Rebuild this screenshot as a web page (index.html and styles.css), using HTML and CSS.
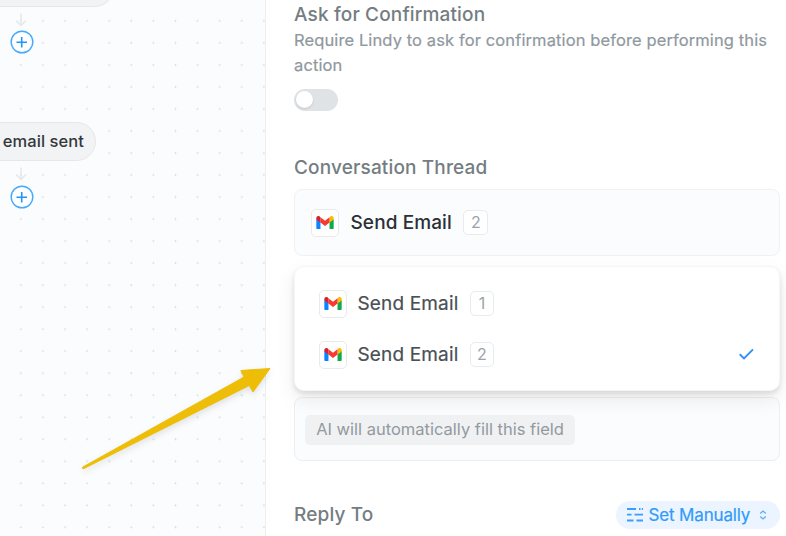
FILE: index.html
```html
<!DOCTYPE html>
<html lang="en">
<head>
<meta charset="utf-8">
<title>Send Email settings</title>
<link rel="stylesheet" href="styles.css">
</head>
<body>
<svg class="defs" aria-hidden="true">
  <symbol id="gmail" viewBox="0 0 18 14">
    <path fill="#0a84ff" d="M0 3v9.600c0 .5.4.9.9.9H4.300V6z"/>
    <path fill="#12a84c" d="M13.700 6v7.500h3.400c.5 0 .9-.4.9-.9V3z"/>
    <path fill="#ffba00" d="M13.700 1.800V6.800l4.300-3.300V2.200C18 .3 15.900-.5 14.500.6z"/>
    <path fill="#f8392f" d="M4.300 6.800V1.300L9 4.900l4.700-3.600v5.500L9 10.400z"/>
    <path fill="#dc202b" d="M0 2.200v1.300l4.300 3.300V1.200L3.500.6C2.100-.5 0 .3 0 2.200z"/>
  </symbol>
  <symbol id="down" viewBox="0 0 12 14">
    <path d="M6 .5v12M1 7.500l5 5 5-5" fill="none" stroke="#e5e7e9" stroke-width="1.500"/>
  </symbol>
  <symbol id="plus" viewBox="0 0 24 24">
    <circle cx="12" cy="12" r="10.800" fill="#fff" stroke="#45a9fb" stroke-width="1.400"/>
    <path d="M11.700 7v10.500M6.500 12.200h10.500" stroke="#2196f8" stroke-width="1.600"/>
  </symbol>
</svg>
<div class="app">
  <section class="canvas">
    <div class="node node-top"></div>
    <svg class="down down-a"><use href="#down"/></svg>
    <svg class="plus plus-a"><use href="#plus"/></svg>
    <div class="node node-sent">email sent</div>
    <svg class="down down-b"><use href="#down"/></svg>
    <svg class="plus plus-b"><use href="#plus"/></svg>
  </section>
  <main class="panel">
    <h2 class="title t-ask">Ask for Confirmation</h2>
    <p class="desc">Require Lindy to ask for confirmation before performing this<br>action</p>
    <div class="toggle"><span class="knob"></span></div>
    <h2 class="title t-thread">Conversation Thread</h2>
    <div class="select">
      <span class="logo"><svg><use href="#gmail"/></svg></span>
      <span class="name">Send Email</span>
      <span class="num">2</span>
    </div>
    <div class="menu">
      <div class="option">
        <span class="logo"><svg><use href="#gmail"/></svg></span>
        <span class="name">Send Email</span>
        <span class="num">1</span>
      </div>
      <div class="option">
        <span class="logo"><svg><use href="#gmail"/></svg></span>
        <span class="name">Send Email</span>
        <span class="num">2</span>
        <svg class="check" viewBox="0 0 16 12"><path d="M1.700 5.300l4.300 4.200L15 .3" fill="none" stroke="#2f8ffb" stroke-width="1.900"/></svg>
      </div>
    </div>
    <div class="field"><span class="hint">AI will automatically fill this field</span></div>
    <div class="row">
      <h2 class="title t-reply">Reply To</h2>
      <div class="mode">
        <svg class="sliders" viewBox="0 0 18 16"><path d="M1 2h9M13 2h1.500M15.800 2H17M1 7.700h4.500M8.500 7.700H17M1 13.500h6.500M10.500 13.500H17" fill="none" stroke="#3d9dfb" stroke-width="1.800"/></svg>
        <span class="mode-name">Set Manually</span>
        <svg class="updown" viewBox="0 0 8 10"><path d="M1.200 3.500L4 1l2.800 2.500M1.200 6.500L4 9l2.800-2.500" fill="none" stroke="#5aaefc" stroke-width="1.300"/></svg>
      </div>
    </div>
  </main>
  <svg class="pointer" viewBox="0 0 200 116"><path d="M12.500 107.200L174 17 170.800 10.500 200 8.500 183 32 179.200 25.500 14 108.500Q11.500 109 12.500 107.200Z" fill="#edbd08" stroke="#edbd08" stroke-width="1" stroke-linejoin="round"/></svg>
</div>
</body>
</html>
```
FILE: styles.css
```css
* { box-sizing: border-box; }
body { margin: 0; background: #fff; font-family: Inter, "Liberation Sans", sans-serif; }
svg { display: block; overflow: visible; }
.defs { position: absolute; width: 0; height: 0; }
.app {
  position: relative;
  display: grid;
  grid-template-columns: 266px 1fr;
  width: 786px;
  height: 536px;
  overflow: hidden;
}
.canvas {
  position: relative;
  overflow: hidden;
  border-right: 1px solid #eceef0;
  background-color: #fbfcfe;
  background-image: radial-gradient(circle, #d5d8db 0.5px, transparent 1.300px);
  background-size: 22.100px 22.030px;
  background-position: 9.800px 9.900px;
}
.node {
  position: absolute;
  border: 1px solid #e6e7e9;
  background: #f2f3f4;
  color: #33383d;
}
.node-top { left: -60px; top: -32px; width: 174px; height: 39px; border-radius: 20px; }
.node-sent {
  left: -60px;
  top: 122px;
  width: 156px;
  height: 39px;
  padding-right: 11px;
  border-radius: 20px;
  font-size: 16.500px;
  font-weight: 500;
  line-height: 36px;
  letter-spacing: 0.070px;
  text-align: right;
}
.down { position: absolute; left: 15.300px; width: 12px; height: 14px; }
.down-a { top: 13px; }
.down-b { top: 167px; }
.plus { position: absolute; left: 9.500px; width: 24px; height: 24px; }
.plus-a { top: 30.200px; }
.plus-b { top: 184.500px; }

.panel { display: flex; flex-direction: column; padding: 2px 6px 0 28px; }
.title { margin: 0; font-size: 19px; font-weight: 500; line-height: 26px; letter-spacing: 0.150px; color: #747d82; }
.desc { margin: 0; font-size: 16.500px; line-height: 25px; letter-spacing: 0.110px; color: #8f989e; -webkit-text-stroke: 0.200px #8f989e; white-space: nowrap; }
.toggle { width: 44px; height: 22px; margin-top: 11px; padding: 2px; border-radius: 11px; background: #dfe3e6; }
.knob { display: block; width: 17px; height: 17px; border-radius: 50%; background: #fff; box-shadow: 0 1px 2px #0002; }
.t-thread { margin-top: 44px; }
.select, .option { display: flex; align-items: center; }
.select {
  height: 67px;
  margin-top: 8px;
  padding-left: 16px;
  border: 1px solid #eff1f3;
  border-radius: 8px;
  background: #fbfcfe;
}
.logo {
  display: grid;
  place-items: center;
  width: 28px;
  height: 28px;
  border: 1px solid #e8eaec;
  border-radius: 5px;
  background: #fff;
}
.logo svg { width: 18px; height: 13.500px; }
.name { margin-left: 11.500px; font-size: 19px; font-weight: 500; line-height: 26px; letter-spacing: 0.100px; color: #2b3035; white-space: nowrap; }
.num {
  width: 25px;
  height: 25px;
  margin-left: 11.500px;
  border: 1px solid #e9ebed;
  border-radius: 5px;
  background: #fff;
  font-size: 16px;
  line-height: 22px;
  text-align: center;
  color: #9da2a6;
}
.menu {
  z-index: 1;
  height: 125px;
  margin-top: 10px;
  padding: 11px 25px 0 24px;
  border: 1px solid #f5f6f7;
  border-radius: 10px;
  background: #fff;
  box-shadow: 0 3px 5px #0000001a, 0 8px 20px #00000014;
}
.option { height: 51px; }
.option .name { margin-left: 10.500px; font-weight: 400; letter-spacing: 0.150px; color: #4a4f54; -webkit-text-stroke: 0.200px #4a4f54; }
.option .num { width: 24px; }
.check { width: 16px; height: 12px; margin-left: auto; }
.field {
  display: flex;
  align-items: flex-start;
  height: 64px;
  margin-top: 6px;
  padding: 17px 10px;
  border: 1px solid #eceef0;
  border-radius: 8px;
  background: #fbfcfe;
}
.hint {
  width: 270px;
  height: 30px;
  border-radius: 5px;
  background: #f0f1f3;
  font-size: 16.500px;
  line-height: 29px;
  text-align: center;
  color: #929a9f;
  white-space: nowrap;
}
.row { display: flex; align-items: center; justify-content: space-between; margin-top: 40px; }
.mode { display: flex; align-items: center; width: 164px; height: 28px; padding-left: 10px; border-radius: 14px; background: #ebf4ff; color: #309bfa; }
.sliders { width: 18px; height: 16px; }
.mode-name { margin-left: 4.500px; font-size: 17px; line-height: 26px; letter-spacing: -0.150px; -webkit-text-stroke: 0.200px #309bfa; white-space: nowrap; }
.updown { width: 8px; height: 10px; margin-left: auto; margin-right: 13px; }
.pointer { position: absolute; z-index: 2; left: 70px; top: 360px; width: 200px; height: 116px; filter: drop-shadow(0 3px 3px #0000001c); }
```
